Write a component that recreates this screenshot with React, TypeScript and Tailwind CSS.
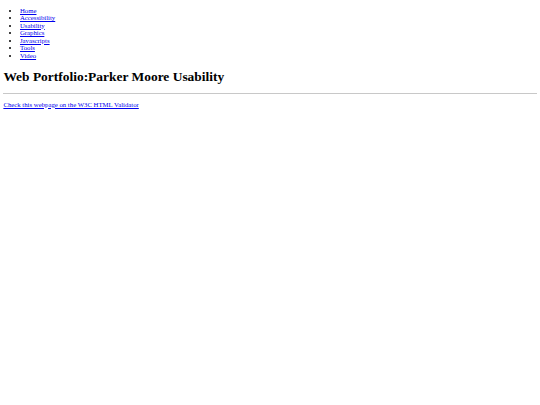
export default function App() {
  const links = ["Home", "Accessibility", "Usability", "Graphics", "Javascripts", "Tools", "Video"];
  return (
    <div className="flow-root min-h-[405px] bg-white px-[3.4px] text-[6.75px] leading-[7.5px] text-black [font-family:'Liberation_Serif',serif]">
      <ul className="mt-[6.6px] mb-[6.7px] list-disc pl-[16.6px]">
        {links.map((l) => (
          <li key={l}>
            <a href="#" className="text-[#0000ee] underline">
              {l}
            </a>
          </li>
        ))}
      </ul>
      <h1 className="mt-[10px] mb-[8.4px] text-[13.45px] leading-[1.15] font-bold">Web Portfolio:Parker Moore Usability</h1>
      <hr className="my-[3.4px] border-t border-[#c8c8c8]" />
      <p className="my-[6.9px]">
        <a href="#" className="text-[#0000ee] underline">
          Check this webpage on the W3C HTML Validator
        </a>
      </p>
    </div>
  );
}
